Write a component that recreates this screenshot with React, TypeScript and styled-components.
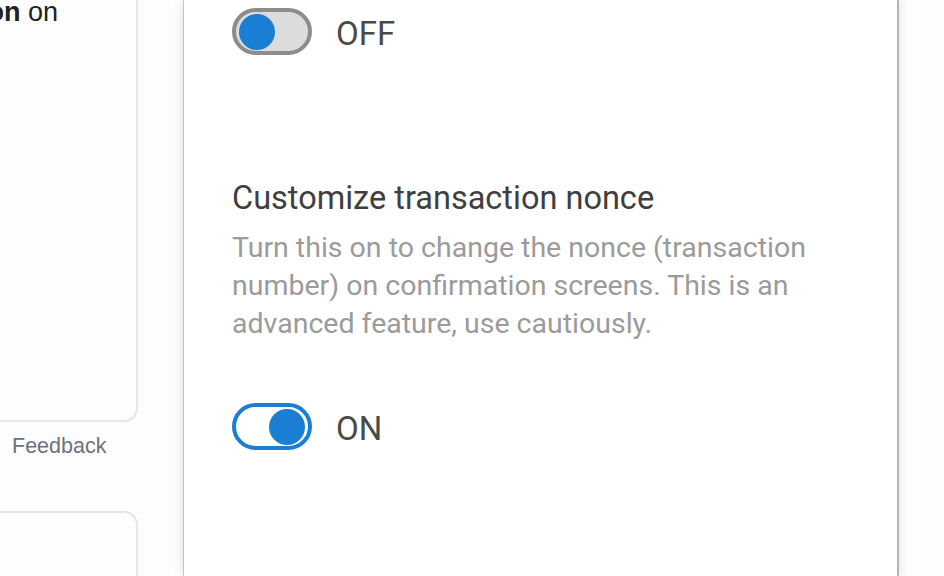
import React from "react";
import styled, { createGlobalStyle } from "styled-components";

const Global = createGlobalStyle`
  html, body { margin: 0; padding: 0; background: #fdfdfd; overflow: hidden; }
  #root { height: 576px; }
`;

const Page = styled.div`
  display: flex;
  align-items: flex-start;
  width: 944px;
  height: 576px;
  overflow: hidden;
  background: #fdfdfd;
`;

const LeftColumn = styled.div`
  flex: none;
  width: 338px;
  margin-left: -200px;
  display: flex;
  flex-direction: column;
`;

const Card = styled.div<{ $height: number; $top?: number }>`
  flex: none;
  box-sizing: border-box;
  height: ${(p) => p.$height}px;
  margin-top: ${(p) => p.$top ?? 0}px;
  border: 2px solid #e6e6e6;
  border-radius: 14px;
  background: #fdfdfd;
  padding: 34px 0 0 0;
  display: flex;
  flex-direction: column;
`;

const CardLine = styled.div`
  font-family: "Liberation Sans", Arial, sans-serif;
  font-size: 27px;
  line-height: 32px;
  color: #222;
  white-space: nowrap;
  text-align: right;
  padding-right: 78px;
  b { font-weight: 700; }
`;

const Feedback = styled.div`
  font-family: "Liberation Sans", Arial, sans-serif;
  font-size: 21.5px;
  line-height: 26px;
  color: #6a737d;
  margin-top: 11px;
  padding-left: 212px;
`;

const Panel = styled.div`
  flex: none;
  box-sizing: border-box;
  width: 716px;
  height: 576px;
  margin-left: 45px;
  background: #fff;
  border-left: 1px solid #c2c2c2;
  border-right: 2px solid #b5b5b5;
  box-shadow: 0 0 10px rgba(0, 0, 0, 0.12);
  padding: 8px 48px 0 48px;
  display: flex;
  flex-direction: column;
`;

const ToggleRow = styled.div<{ $top?: number }>`
  display: flex;
  align-items: center;
  gap: 24px;
  margin-top: ${(p) => p.$top ?? 0}px;
`;

const Track = styled.div<{ $on: boolean }>`
  box-sizing: border-box;
  width: 80px;
  height: 47px;
  border-radius: 24px;
  border: 4px solid ${(p) => (p.$on ? "#1a7fd4" : "#8c8c8c")};
  background: ${(p) => (p.$on ? "#ffffff" : "#dcdcdc")};
  display: flex;
  align-items: center;
  justify-content: ${(p) => (p.$on ? "flex-end" : "flex-start")};
  padding: 0 3px;
`;

const Knob = styled.div`
  width: 36px;
  height: 36px;
  border-radius: 50%;
  background: #1a7fd4;
`;

const ToggleLabel = styled.span`
  font-family: Roboto, "Noto Sans", sans-serif;
  font-size: 33px;
  line-height: 40px;
  padding-top: 4px;
  color: #4a4a4a;
`;

const Heading = styled.h2`
  margin: 0;
  margin-top: 124px;
  font-family: Roboto, "Noto Sans", sans-serif;
  font-weight: 400;
  font-size: 32.5px;
  line-height: 38px;
  color: #3f3f3f;
`;

const Description = styled.p`
  margin: 0;
  margin-top: 12px;
  font-family: Roboto, "Noto Sans", sans-serif;
  font-size: 28.5px;
  line-height: 38px;
  color: #9b9b9b;
  max-width: 610px;
`;

function Toggle({ on, label, top }: { on: boolean; label: string; top?: number }) {
  return (
    <ToggleRow $top={top}>
      <Track $on={on}>
        <Knob />
      </Track>
      <ToggleLabel>{label}</ToggleLabel>
    </ToggleRow>
  );
}

export default function App() {
  return (
    <>
      <Global />
      <Page>
        <LeftColumn>
          <Card $height={462} $top={-40}>
            <CardLine>
              Use <b>Transaction</b> on
            </CardLine>
          </Card>
          <Feedback>Feedback</Feedback>
          <Card $height={200} $top={52} />
        </LeftColumn>
        <Panel>
          <Toggle on={false} label="OFF" />
          <Heading>Customize transaction nonce</Heading>
          <Description>
            Turn this on to change the nonce (transaction number) on confirmation screens. This is an
            advanced feature, use cautiously.
          </Description>
          <Toggle on={true} label="ON" top={60} />
        </Panel>
      </Page>
    </>
  );
}
